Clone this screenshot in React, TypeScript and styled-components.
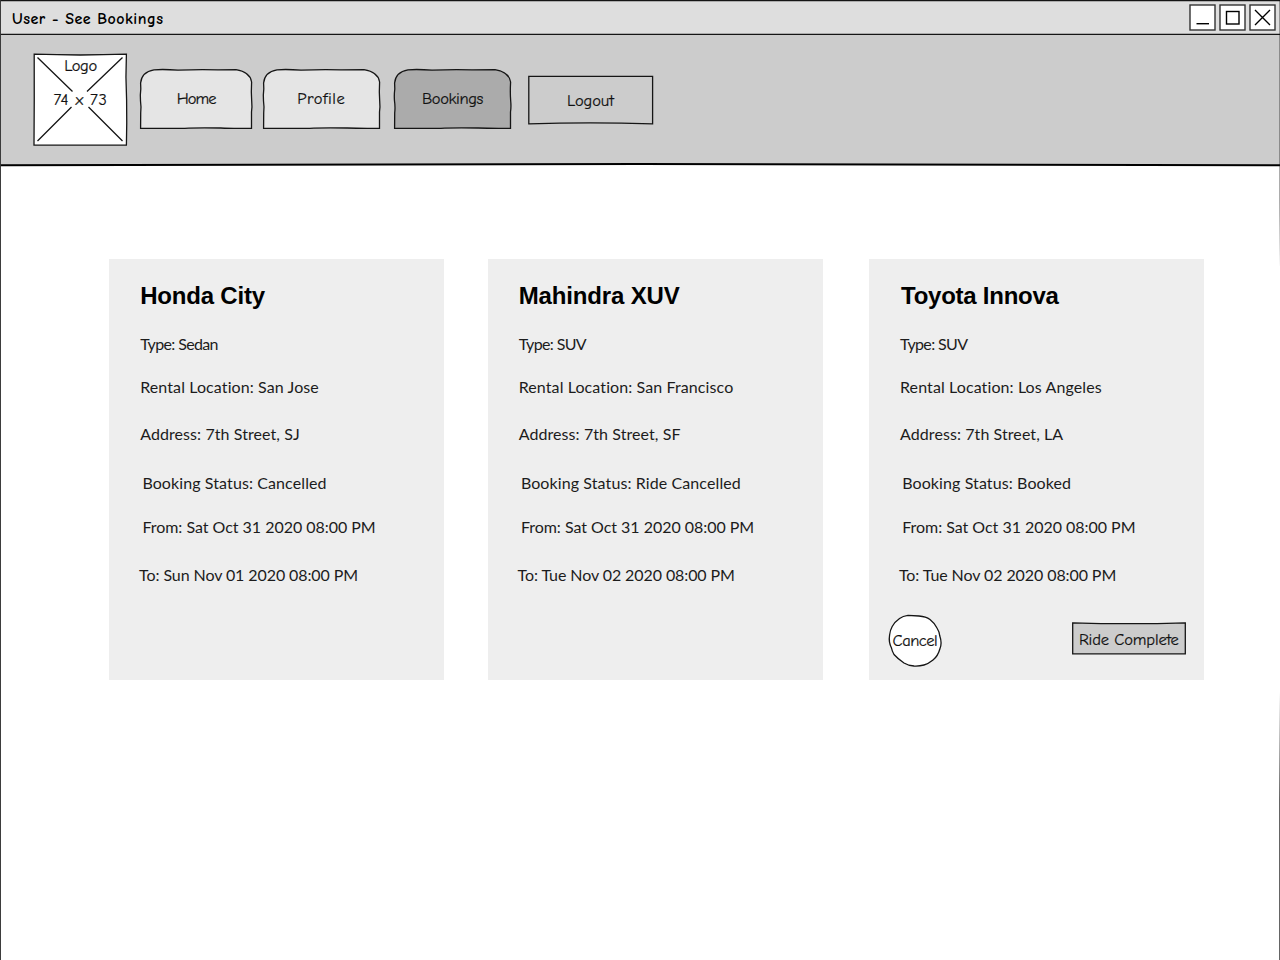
import React from 'react';
import styled, { createGlobalStyle } from 'styled-components';

const INK = '#151515';

const GlobalStyle = createGlobalStyle`
  *, *::before, *::after { box-sizing: border-box; }
  body { margin: 0; background: #fff; overflow: hidden; }
  h2, p { margin: 0; }
  button { border: 0; padding: 0; background: none; }
`;

const Window = styled.div`
  position: relative;
  display: flex;
  flex-direction: column;
  width: 1280px;
  height: 960px;
  background: #fff;
`;

/* Hand-drawn outline painted behind a control's label. */
const Outline = styled.svg`
  position: absolute;
  inset: 0;
  width: 100%;
  height: 100%;
  overflow: visible;
  fill: none;
  stroke: ${INK};
  stroke-width: 1.3;
  pointer-events: none;
`;

const HeavyRule = styled.path`
  stroke: #000;
  stroke-width: 2;
`;

const TitleBar = styled.header`
  display: flex;
  flex: none;
  align-items: flex-start;
  justify-content: space-between;
  height: 35px;
  padding: 4px 4px 0 12px;
  background: #dedede;
`;

const WindowTitle = styled.div`
  padding-top: 5px;
  font: bold 16px/20px 'Comic Neue', Lato, sans-serif;
  letter-spacing: 0.49px;
  color: #000;
`;

const WindowButtons = styled.div`
  display: flex;
  gap: 3px;
`;

const WindowButton = styled.button`
  width: 27px;
  height: 27px;

  svg {
    display: block;
    fill: none;
    stroke: #000;
    stroke-width: 1.4;
  }
`;

const NavBar = styled.nav`
  display: flex;
  flex: none;
  align-items: flex-start;
  height: 130px;
  padding: 19px 0 0 34px;
  background: #ccc;
`;

const Label = styled.span<{ $tracking?: number }>`
  position: relative;
  font: 16.5px/20px 'Comic Neue', Lato, sans-serif;
  letter-spacing: ${(p) => p.$tracking ?? 0}px;
  font-variant-ligatures: none;
  white-space: nowrap;
  color: #111;
  -webkit-text-stroke: 0.2px #111;
`;

const Logo = styled.div`
  position: relative;
  display: flex;
  flex-direction: column;
  align-items: center;
  gap: 14px;
  width: 93px;
  height: 92px;
  padding-top: 2px;
`;

const Tab = styled.button<{ $width: number; $gap: number; $active?: boolean }>`
  position: relative;
  display: flex;
  align-items: center;
  justify-content: center;
  width: ${(p) => p.$width}px;
  height: 59px;
  margin: 15px 0 0 ${(p) => p.$gap}px;

  ${Outline} { fill: ${(p) => (p.$active ? '#ababab' : '#e5e5e5')}; }
`;

const LogoutButton = styled.button`
  position: relative;
  display: flex;
  align-items: center;
  justify-content: center;
  width: 125px;
  height: 48px;
  margin: 22px 0 0 17px;
  padding-top: 1px;
`;

const Bookings = styled.main`
  display: grid;
  grid-template-columns: repeat(3, 335px);
  column-gap: 45px;
  padding: 94px 0 0 109px;
`;

const Card = styled.article<{ $shift?: number }>`
  display: flex;
  flex-direction: column;
  height: 421px;
  margin-left: ${(p) => p.$shift ?? 0}px;
  margin-right: ${(p) => -(p.$shift ?? 0)}px;
  padding: 23px 18px 0 31.2px;
  background: #eee;
`;

const CarName = styled.h2<{ $indent?: number; $tracking: number }>`
  height: 28px;
  padding-left: ${(p) => p.$indent ?? 0}px;
  font: bold 24px/28px 'Liberation Sans', Arial, sans-serif;
  letter-spacing: ${(p) => p.$tracking}px;
  color: #000;
`;

const Detail = styled.p<{ $above: number; $indent?: number; $tracking?: number }>`
  height: 20px;
  margin-top: ${(p) => p.$above}px;
  margin-left: ${(p) => p.$indent ?? 0}px;
  font: 16px/20px Lato, sans-serif;
  letter-spacing: ${(p) => p.$tracking ?? 0}px;
  font-variant-ligatures: none;
  white-space: nowrap;
  color: #1c1c1c;
`;

const Actions = styled.div`
  display: flex;
  align-items: flex-start;
  justify-content: space-between;
  margin: 30px 0 0 -11.2px;
`;

const CancelButton = styled.button`
  position: relative;
  display: flex;
  align-items: center;
  justify-content: center;
  width: 52px;
  height: 50px;
  padding-top: 1px;

  ${Outline} { fill: #fff; }
`;

const CompleteButton = styled.button`
  position: relative;
  display: flex;
  align-items: center;
  justify-content: center;
  width: 114px;
  height: 32px;
  margin-top: 7px;
  padding-top: 3px;

  ${Outline} { fill: #ccc; }
`;

const tabPath = (w: number) =>
  `M.6 59.3 L.7 44 Q1.4 38 .5 32 Q0 26 .8 20 L.6 14 Q1.5 3 14 .8 Q24 0 38 1.2 Q60 .2 78 .9 L${w - 16} .7 Q${w - 2} 3 ${w - 0.4} 13 Q${w - 1} 24 ${w - 0.3} 32 Q${w + 0.3} 38 ${w - 0.5} 43 L${w - 0.5} 59.3 Q${w - 20} 59.6 ${w * 0.72} 59 Q${w * 0.5} 58.6 ${w * 0.4} 59.3 Z`;

interface NavTab {
  name: string;
  width: number;
  gap: number;
  tracking: number;
  active?: boolean;
}

const tabs: NavTab[] = [
  { name: 'Home', width: 112, gap: 13.2, tracking: -0.9 },
  { name: 'Profile', width: 117, gap: 10.6, tracking: 0.5 },
  { name: 'Bookings', width: 117, gap: 14.2, tracking: -0.4, active: true },
];

interface Booking {
  car: string;
  nameIndent?: number;
  nameTracking: number;
  shift?: number;
  type: string;
  location: string;
  address: string;
  status: string;
  from: string;
  to: string;
  open?: boolean;
}

const bookings: Booking[] = [
  {
    car: 'Honda City', nameTracking: -0.2, type: 'Sedan', location: 'San Jose', address: '7th Street, SJ',
    status: 'Cancelled', from: 'Sat Oct 31 2020 08:00 PM', to: 'Sun Nov 01 2020 08:00 PM',
  },
  {
    car: 'Mahindra XUV', nameTracking: -0.15, shift: -1.5, type: 'SUV', location: 'San Francisco', address: '7th Street, SF',
    status: 'Ride Cancelled', from: 'Sat Oct 31 2020 08:00 PM', to: 'Tue Nov 02 2020 08:00 PM',
  },
  {
    car: 'Toyota Innova', nameIndent: 1, nameTracking: -0.25, shift: -0.2, type: 'SUV', location: 'Los Angeles', address: '7th Street, LA',
    status: 'Booked', from: 'Sat Oct 31 2020 08:00 PM', to: 'Tue Nov 02 2020 08:00 PM', open: true,
  },
];

function WindowControls() {
  return (
    <WindowButtons>
      <WindowButton aria-label="Minimize">
        <svg width="27" height="27">
          <rect x="1" y="1" width="25" height="25" fill="#fff" stroke="#333" />
          <path d="M7.5 19.7H20" />
        </svg>
      </WindowButton>
      <WindowButton aria-label="Maximize">
        <svg width="27" height="27">
          <rect x="1" y="1" width="25" height="25" fill="#fff" stroke="#333" />
          <rect x="7.5" y="7.5" width="12.5" height="12.5" />
        </svg>
      </WindowButton>
      <WindowButton aria-label="Close">
        <svg width="27" height="27">
          <rect x="1" y="1" width="25" height="25" fill="#fff" stroke="#333" />
          <path d="M6 6L21 21M21 6L6 21" />
        </svg>
      </WindowButton>
    </WindowButtons>
  );
}

function BookingCard({ booking }: { booking: Booking }) {
  return (
    <Card $shift={booking.shift}>
      <CarName $indent={booking.nameIndent} $tracking={booking.nameTracking}>{booking.car}</CarName>
      <Detail $above={24} $tracking={-0.64}>Type: {booking.type}</Detail>
      <Detail $above={23} $tracking={0.1}>Rental Location: {booking.location}</Detail>
      <Detail $above={27} $tracking={0.08}>Address: {booking.address}</Detail>
      <Detail $above={29} $indent={2.2} $tracking={0.1}>Booking Status: {booking.status}</Detail>
      <Detail $above={24} $indent={2.2} $tracking={-0.03}>From: {booking.from}</Detail>
      <Detail $above={28} $indent={-1.1} $tracking={-0.09}>To: {booking.to}</Detail>
      {booking.open && (
        <Actions>
          <CancelButton>
            <Outline>
              <path d="M19 .3L30 1Q37 1.5 41 4.5Q46 8.5 48 13Q50.5 17 50.8 21Q53.2 28 51 33.5Q49 41 44 45Q39 49 35 50Q30 51.3 25 51Q19 50.5 15 48Q9 44 5 39.5Q3 36 2.5 33Q-.6 27 .6 20Q1.2 15 3.2 11.5Q9 1.5 19 .3Z" />
            </Outline>
            <Label $tracking={-0.5}>Cancel</Label>
          </CancelButton>
          <CompleteButton>
            <Outline>
              <path d="M.7 .8 Q57 2.5 113.3 .8 V31.8 H.7Z" />
            </Outline>
            <Label $tracking={-0.15}>Ride Complete</Label>
          </CompleteButton>
        </Actions>
      )}
    </Card>
  );
}

export default function App() {
  return (
    <Window>
      <GlobalStyle />
      <TitleBar>
        <WindowTitle>User - See Bookings</WindowTitle>
        <WindowControls />
      </TitleBar>
      <NavBar>
        <Logo>
          <Outline>
            <path d="M.2 .2 Q46 1.8 92.4 .2 Q91.4 22 92.6 46 Q93 70 92.4 91.2 H0 Q.4 46 .2 .2Z" fill="#fff" />
            <path d="M3.5 3.5L38.5 37.5M88.5 3.5L53 37.5M3.5 87L37.5 53M88.5 87L54.5 53" />
          </Outline>
          <Label $tracking={-0.4}>Logo</Label>
          <Label $tracking={0.65}>74 x 73</Label>
        </Logo>
        {tabs.map((tab) => (
          <Tab key={tab.name} $width={tab.width} $gap={tab.gap} $active={tab.active}>
            <Outline><path d={tabPath(tab.width)} /></Outline>
            <Label $tracking={tab.tracking}>{tab.name}</Label>
          </Tab>
        ))}
        <LogoutButton>
          <Outline><path d="M.8 .4 H124.6 V47.8 Q62 46 .8 47.8Z" /></Outline>
          <Label $tracking={-0.1}>Logout</Label>
        </LogoutButton>
      </NavBar>
      <Bookings>
        {bookings.map((booking) => (
          <BookingCard key={booking.car} booking={booking} />
        ))}
      </Bookings>
      <Outline viewBox="0 0 1280 960">
        <path d="M0 .5H1280M0 34.3H1280" />
        <HeavyRule d="M0 165.3Q640 162.7 1280 165.3" />
        <path d="M.3 0V960" stroke="#333" />
        <path d="M1280.3 0V200Q1280.6 280 1281.2 320V600Q1280.4 700 1280 800V960" />
      </Outline>
    </Window>
  );
}
